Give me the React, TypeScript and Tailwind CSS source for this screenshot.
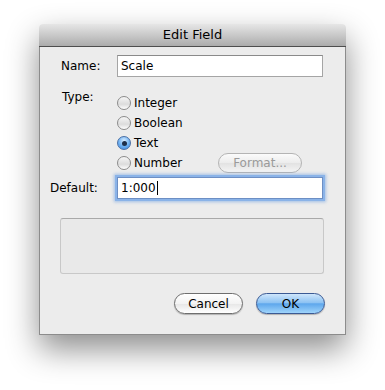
const font = "font-['Lucida_Grande','DejaVu_Sans',sans-serif]"

function Radio({label, checked}: {label: string; checked?: boolean}) {
    return (
        <div className="flex h-[20px] items-center">
            <div
                className={
                    checked
                        ? 'flex h-[14px] w-[14px] items-center justify-center rounded-full border border-[#4a6fa5] bg-[radial-gradient(circle_at_50%_30%,#d7ecff_0%,#6cb0f2_55%,#3f86db_100%)]'
                        : 'h-[14px] w-[14px] rounded-full border border-[#8b8b8b] bg-[linear-gradient(#f6f6f6,#dcdcdc_60%,#ffffff)]'
                }
            >
                {checked && <div className="h-[5px] w-[5px] rounded-full bg-[#1e2f4a]"/>}
            </div>
            <span className="ml-[3px] text-[12px] text-black">{label}</span>
        </div>
    )
}

export default function App() {
    return (
        <div className={`h-[390px] w-[385px] bg-white ${font}`}>
            <div className="pt-[24px] pl-[39px]">
                <div className="flex h-[311px] w-[307px] flex-col rounded-t-[4px] shadow-[0_14px_32px_rgba(0,0,0,0.45)]">
                    {/* title bar */}
                    <div className="flex h-[23px] items-center justify-center rounded-t-[4px] border-b border-[#4e4e4e] bg-[linear-gradient(#e6e6e6,#cfcfcf_40%,#acacac)] text-[13px] text-black">
                        Edit Field
                    </div>

                    <div className="flex flex-1 flex-col border-x border-b border-[#8c8c8c] bg-[#ececec] pt-[7px]">
                        {/* name */}
                        <div className="flex h-[23px] items-center">
                            <div className="w-[77px] pl-[21px] text-[12px] text-black">Name:</div>
                            <div className="flex h-[22px] w-[206px] items-center border border-[#a5a5a5] border-t-[#8a8a8a] bg-white pl-[3px] text-[12px] text-black">
                                Scale
                            </div>
                        </div>

                        {/* type */}
                        <div className="mt-[13px] flex">
                            <div className="w-[77px] pl-[22px] text-[12px] leading-[15px] text-black">Type:</div>
                            <div className="mt-[3px] flex flex-col">
                                <Radio label="Integer"/>
                                <Radio label="Boolean"/>
                                <Radio label="Text" checked/>
                                <div className="flex items-center">
                                    <div className="w-[101px]">
                                        <Radio label="Number"/>
                                    </div>
                                    <div className="flex h-[20px] w-[84px] items-center justify-center rounded-full border border-[#b4b4b4] bg-[linear-gradient(#fbfbfb,#ececec_50%,#e2e2e2_51%,#f4f4f4)] text-[12px] text-[#9a9a9a]">
                                        Format...
                                    </div>
                                </div>
                            </div>
                        </div>

                        {/* default */}
                        <div className="mt-[4px] flex h-[22px] items-center">
                            <div className="w-[77px] pl-[10px] text-[12px] text-black">Default:</div>
                            <div className="flex h-[22px] w-[206px] items-center border border-[#6d8fc4] bg-white pl-[3px] text-[12px] text-black shadow-[0_0_0_2px_#8ab3e8,0_0_3px_3px_rgba(110,160,225,0.6)]">
                                1:000
                                <span className="ml-[1px] h-[14px] w-px bg-black"/>
                            </div>
                        </div>

                        {/* empty group box */}
                        <div className="mt-[19px] ml-[20px] h-[56px] w-[264px] rounded-[3px] border border-[#c8c8c8] border-t-[#a9a9a9] bg-[#e9e9e9]"/>

                        {/* buttons */}
                        <div className="mt-[19px] flex gap-[13px] pl-[134px]">
                            <div className="flex h-[21px] w-[69px] items-center justify-center rounded-full border border-[#6e6e6e] bg-[linear-gradient(#ffffff,#f3f3f3_50%,#e6e6e6_51%,#ffffff)] text-[12px] text-black shadow-[0_1px_1px_rgba(0,0,0,0.25)]">
                                Cancel
                            </div>
                            <div className="flex h-[21px] w-[69px] items-center justify-center rounded-full border border-[#3b5a94] bg-[linear-gradient(#cfe6fb,#8ec3f3_45%,#5ea7ec_52%,#9fd4fb)] text-[12px] text-black shadow-[0_1px_1px_rgba(0,0,0,0.25)]">
                                OK
                            </div>
                        </div>
                    </div>
                </div>
            </div>
        </div>
    )
}
